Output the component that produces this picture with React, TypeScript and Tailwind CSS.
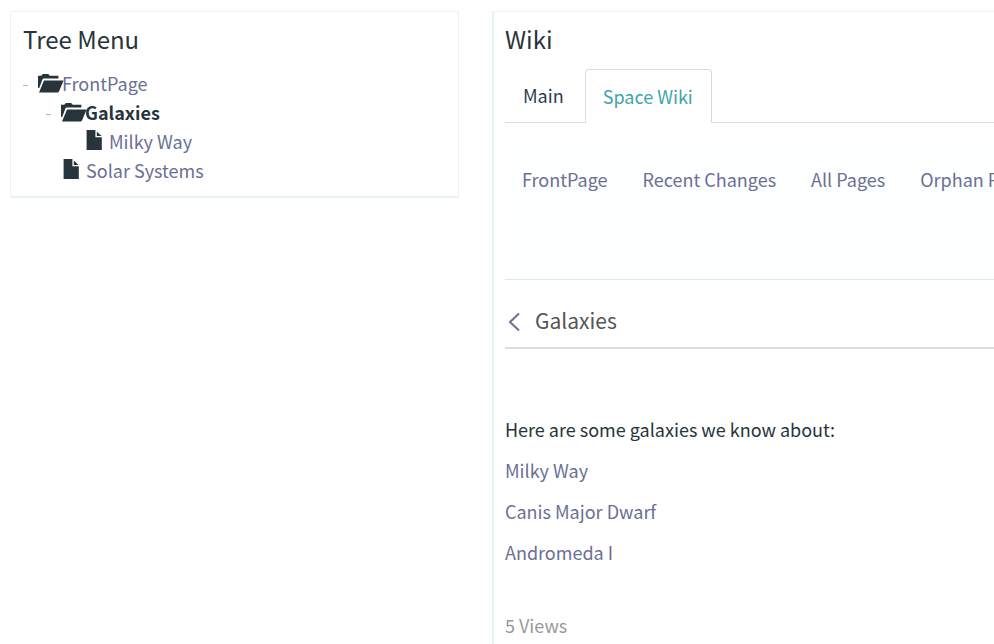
import React from 'react';

interface TreeRowProps {
  label: string;
  children: React.ReactNode;
}

const FolderIcon: React.FC = () => (
  <svg viewBox="0 0 26 19" className="h-[19px] w-[26px] shrink-0" fill="currentColor" aria-hidden="true">
    <path d="M0 14V1.8H3.4Q3.8 0 5.4 0H9.6Q11.2 0 11.6 1.8H20.4V4.6H5.8Q4.8 4.6 4.4 5.6L1.2 14z" />
    <path d="M6 6.4h19.6L21 17.4Q20.6 18.4 19.6 18.4H1z" />
  </svg>
);

const FileIcon: React.FC = () => (
  <svg viewBox="0 0 16 20" className="h-5 w-4 shrink-0" fill="currentColor" aria-hidden="true">
    <path d="M.6 0H9.4v7.2H15.8V20H.6z" />
    <path d="M10.8 1.4L15.6 6H10.8z" />
  </svg>
);

const Toggle: React.FC<{ label: string }> = ({ label }) => (
  <button aria-label={`Collapse ${label}`} className="flex h-7 w-[15px] shrink-0 items-center pt-1">
    <span className="h-px w-[5px] bg-[#b4b8ba]" />
  </button>
);

const FolderRow: React.FC<TreeRowProps> = ({ label, children }) => (
  <div className="flex h-[29px] items-center">
    <Toggle label={label} />
    <FolderIcon />
    <span className="-ml-0.5">{children}</span>
  </div>
);

const FileRow: React.FC<{ label: string }> = ({ label }) => (
  <div className="flex h-[29px] items-center gap-[7px]">
    <span className="pb-1">
      <FileIcon />
    </span>
    <a href="#" className="text-[#6b6f94]">{label}</a>
  </div>
);

const navLinks = ['FrontPage', 'Recent Changes', 'All Pages', 'Orphan Pages'];
const galaxies = ['Milky Way', 'Canis Major Dwarf', 'Andromeda I'];

const App: React.FC = () => {
  return (
    <div className="grid min-h-screen grid-cols-[449fr_502fr] gap-x-[33px] overflow-hidden bg-white pl-2.5 pt-[11px] font-['Noto_Sans_CJK_SC',sans-serif] text-[18px] leading-[29px] text-[#27343b]">
      <aside className="self-start rounded-xs border border-b-2 border-[#e6f2f4] px-3 pb-[11px] pt-[11px]">
        <h2 className="mb-3.5 text-[24px] leading-8">Tree Menu</h2>
        <ul>
          <li>
            <FolderRow label="FrontPage">
              <a href="#" className="text-[#6b6f94]">FrontPage</a>
            </FolderRow>
            <ul className="pl-[23px]">
              <li>
                <FolderRow label="Galaxies">
                  <strong className="font-bold">Galaxies</strong>
                </FolderRow>
                <ul className="pl-10">
                  <li><FileRow label="Milky Way" /></li>
                </ul>
              </li>
              <li className="pl-[17px]"><FileRow label="Solar Systems" /></li>
            </ul>
          </li>
        </ul>
      </aside>

      <main className="min-w-0 border-l-2 border-t border-[#e6f2f4] pl-[11px] pt-[11px]">
        <h2 className="mb-3.5 text-[24px] leading-8">Wiki</h2>

        {/* Tabs */}
        <div role="tablist" className="flex h-[54px] border-b border-[#d9dada]">
          <button role="tab" aria-selected="false" className="pl-[18px] pr-[21px] text-[#2d3b54]">Main</button>
          <button role="tab" aria-selected="true" className="-mb-px rounded-t border border-b-0 border-[#d9dada] bg-white pl-[17px] pr-[18px] text-[#3fa4a8]">
            Space Wiki
          </button>
        </div>

        <nav className="mt-[22px] h-[135px] overflow-hidden border-b border-[#dfe8e9] bg-[#fdfeff] pl-[17px] pt-5">
          <ul className="flex gap-[35px] whitespace-nowrap">
            {navLinks.map((link) => (
              <li key={link}><a href="#" className="text-[#6b6f94]">{link}</a></li>
            ))}
          </ul>
        </nav>

        <header className="flex h-[69px] items-center gap-[15px] border-b-2 border-[#dcdcde] pl-[3px] pt-3.5">
          <a href="#" aria-label="Back" className="text-[#6b6f94]">
            <svg viewBox="0 0 12 20" className="h-5 w-3" fill="none" stroke="currentColor" strokeWidth="2" aria-hidden="true">
              <path d="M11 2.5L2 11l9 8.5" />
            </svg>
          </a>
          <h1 className="text-[21px] text-[#555]">Galaxies</h1>
        </header>

        <div className="space-y-3 pt-[66px]">
          <p>Here are some galaxies we know about:</p>
          {galaxies.map((galaxy) => (
            <p key={galaxy}><a href="#" className="text-[#6b6f94]">{galaxy}</a></p>
          ))}
        </div>

        <p className="mt-11 text-[#999]">5 Views</p>
      </main>
    </div>
  );
};

export default App;
